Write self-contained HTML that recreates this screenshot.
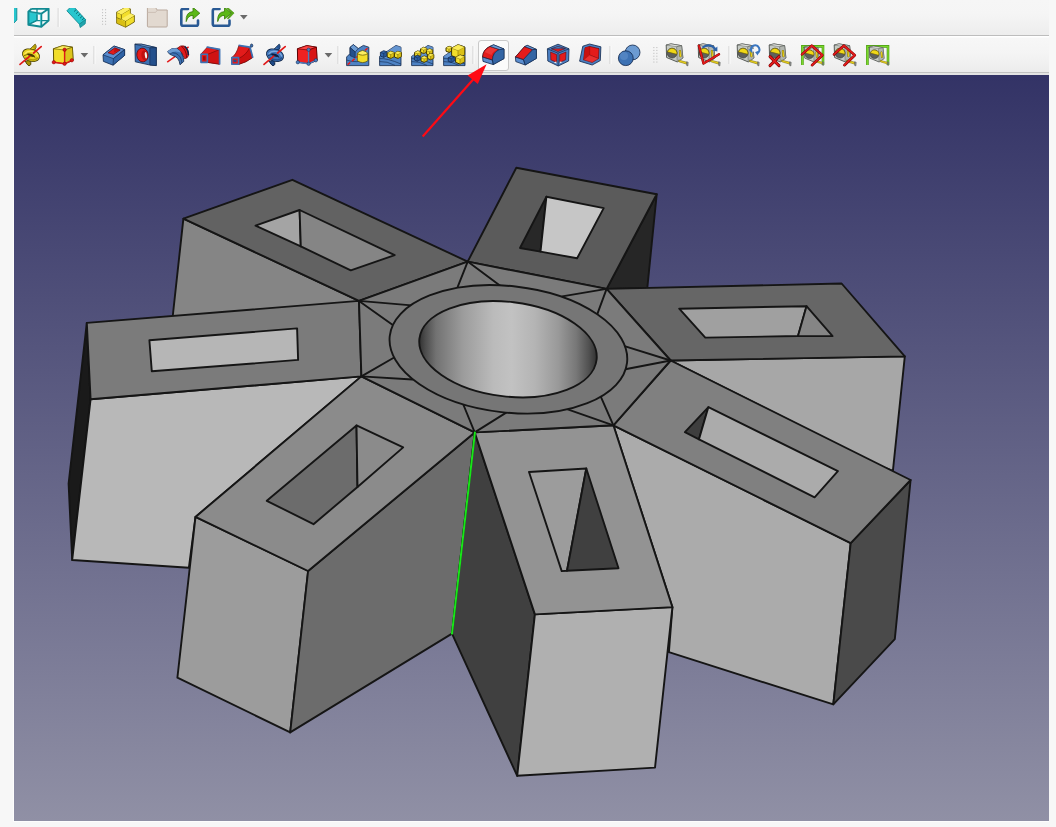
<!DOCTYPE html>
<html><head><meta charset="utf-8"><title>FreeCAD</title>
<style>
html,body{margin:0;padding:0;background:#f7f7f7;}
body{width:1056px;height:827px;overflow:hidden;position:relative;font-family:"Liberation Sans",sans-serif;}
#tb1{position:absolute;left:14px;top:0;width:1035px;height:35px;background:linear-gradient(#f6f6f6 0,#f5f5f5 40%,#ededed 100%);border-bottom:1px solid #bdbdbd;}
#tb2{position:absolute;left:14px;top:36px;width:1035px;height:36px;background:linear-gradient(#ffffff 0,#ffffff 1px,#f7f7f7 2px,#f4f4f4 50%,#ececec 100%);border-bottom:1px solid #c2c2c2;}
#gap{position:absolute;left:14px;top:73px;width:1035px;height:2px;background:#e4e4e4;}
#view{position:absolute;left:14px;top:75px;width:1035px;height:746px;background:linear-gradient(#333366,#9090a5);}
#frame{position:absolute;left:13px;top:75px;width:1036px;height:747px;background:#fdfdfd;}
svg{position:absolute;left:0;top:0;}
</style></head><body>
<div id="tb1"></div><div id="tb2"></div><div id="gap"></div><div id="frame"></div><div id="view"></div>
<svg width="1056" height="827" viewBox="0 0 1056 827">
<defs>
<linearGradient id="bore" gradientUnits="userSpaceOnUse" x1="418" y1="0" x2="598" y2="0" gradientTransform="rotate(-6.8 508 349.2)">
<stop offset="0" stop-color="#2c2c2c"/><stop offset="0.04" stop-color="#4c4c4c"/><stop offset="0.10" stop-color="#727272"/><stop offset="0.25" stop-color="#9c9c9c"/><stop offset="0.42" stop-color="#bbbbbb"/><stop offset="0.52" stop-color="#c2c2c2"/><stop offset="0.65" stop-color="#b4b4b4"/><stop offset="0.78" stop-color="#999999"/><stop offset="0.88" stop-color="#777777"/><stop offset="0.95" stop-color="#505050"/><stop offset="1" stop-color="#2c2c2c"/>
</linearGradient>

<clipPath id="row1"><rect x="14" y="8" width="1035" height="26"/></clipPath>
<g id="tape">
 <path d="M0.2,0.8 L5,-0.3 L15.6,1.5 L16.9,13.8 L11.2,17.7 L0.6,13.3 Z" fill="#c6cac4" stroke="#4a4e4a" stroke-width="0.9" stroke-linejoin="round"/>
 <path d="M0.2,0.8 L5,-0.3 L15.6,1.5 L10.6,2.5 Z" fill="#e6e8e4" stroke="#5a5e5a" stroke-width="0.5" stroke-linejoin="round"/>
 <path d="M10.6,2.5 L15.6,1.5 L16.9,13.8 L11.2,17.7 Z" fill="#b2b6b0" stroke="#5a5e5a" stroke-width="0.5" stroke-linejoin="round"/>
 <circle cx="6.1" cy="8.9" r="4.9" fill="#5e605e" stroke="#3a3c3a" stroke-width="0.7"/>
 <path d="M1.37,7.63 A4.9,4.9 0 0 1 10.83,10.17 Z" fill="#f0d818" stroke="#6a5a00" stroke-width="0.6" stroke-linejoin="round"/>
 <path d="M13.9,6.8 L14.5,12" stroke="#7a6a00" stroke-width="2.2" stroke-linecap="round"/>
 <path d="M13.9,6.8 L14.5,12" stroke="#ecd41c" stroke-width="1.3" stroke-linecap="round"/>
 <path d="M12.6,15.8 L21,18.1 L20.8,20 L12.8,17.6 Z" fill="#f0d818" stroke="#6a5a00" stroke-width="0.5" stroke-linejoin="round"/>
 <path d="M20.7,17.5 L22.2,18.1 L21.9,21.7 L20.7,21.3 Z" fill="#9a9e9a" stroke="#4a4c4a" stroke-width="0.5"/>
</g>
<g id="ycube" style="vector-effect:non-scaling-stroke">
 <path vector-effect="non-scaling-stroke" d="M0,3 L5,0.4 L10,2.2 L10,8 L5,10.6 L0,8.6 Z" fill="#f2de2a" stroke="#3e3400" stroke-width="1" stroke-linejoin="round"/>
 <path vector-effect="non-scaling-stroke" d="M0,3 L5,4.8 L10,2.2 M5,4.8 L5,10.6" fill="none" stroke="#5f5200" stroke-width="0.6"/>
 <path d="M5,4.8 L10,2.2 L10,8 L5,10.6 Z" fill="#c8aa08" opacity="0.55"/>
 <path d="M0,3 L5,0.4 L10,2.2 L5,4.8 Z" fill="#fcee60" opacity="0.8"/>
</g>
<g id="bcube">
 <path vector-effect="non-scaling-stroke" d="M0,3 L5,0.4 L10,2.2 L10,8 L5,10.6 L0,8.6 Z" fill="#2f64aa" stroke="#10264a" stroke-width="0.8" stroke-linejoin="round"/>
 <path vector-effect="non-scaling-stroke" d="M0,3 L5,4.8 L10,2.2 M5,4.8 L5,10.6" fill="none" stroke="#10264a" stroke-width="0.6"/>
 <path d="M5,4.8 L10,2.2 L10,8 L5,10.6 Z" fill="#24508c" opacity="0.6"/>
</g>

</defs>
<g stroke="#151515" stroke-width="1.9" stroke-linejoin="round" stroke-linecap="round">
<polygon points="183.4,218.6 359.0,300.9 359.0,332.0 171.0,332.0" fill="#858585"/>
<polygon points="359.0,300.9 183.4,218.6 292.4,179.8 467.7,261.6" fill="#626262"/>
<polygon points="255.5,225.6 299.6,210.0 300.8,246.4" fill="#a4a4a4"/>
<polygon points="299.6,210.0 394.7,255.2 350.8,270.4 300.8,246.4" fill="#858585"/>
<polygon points="656.7,194.3 606.6,288.9 647.3,288.0" fill="#262626"/>
<polygon points="467.7,261.6 516.3,167.7 656.7,194.3 606.6,288.9" fill="#5b5b5b"/>
<polygon points="546.4,196.8 520.0,248.0 540.5,251.6" fill="#282828"/>
<polygon points="546.4,196.8 603.7,208.1 577.1,258.3 540.5,251.6" fill="#c6c6c6"/>
<polygon points="670.6,360.5 904.8,356.4 892.9,470.9 880.0,466.0" fill="#a7a7a7"/>
<polygon points="606.6,288.9 841.6,283.5 904.8,356.4 670.6,360.5" fill="#666666"/>
<polygon points="679.2,308.7 806.5,306.2 798.0,336.0 705.3,337.6" fill="#a0a0a0"/>
<polygon points="806.5,306.2 832.6,336.1 798.0,336.0" fill="#858585"/>
<polygon points="86.8,322.9 68.6,483.5 72.2,560.0 90.6,399.2" fill="#1a1a1a"/>
<polygon points="90.6,399.2 361.4,376.4 195.5,516.9 188.9,567.7 72.2,560.0" fill="#b8b8b8"/>
<polygon points="86.8,322.9 359.0,300.9 361.4,376.4 90.6,399.2" fill="#7b7b7b"/>
<polygon points="149.4,340.2 297.1,328.4 298.1,359.9 151.8,371.3" fill="#b6b6b6"/>
<polygon points="613.4,425.3 850.7,543.1 833.3,704.4 668.9,652.2 672.4,607.2" fill="#ababab"/>
<polygon points="910.6,480.0 850.7,543.1 833.3,704.4 894.8,639.1" fill="#4a4a4a"/>
<polygon points="613.4,425.3 670.6,360.5 910.6,480.0 850.7,543.1" fill="#808080"/>
<polygon points="708.4,407.1 684.9,432.2 699.0,439.3" fill="#3e3e3e"/>
<polygon points="708.4,407.1 837.9,471.2 814.6,497.3 699.0,439.3" fill="#ababab"/>
<polygon points="195.5,516.9 308.1,571.0 290.2,732.4 177.4,677.7" fill="#9c9c9c"/>
<polygon points="308.1,571.0 474.7,432.4 452.0,633.6 290.2,732.4" fill="#6c6c6c"/>
<polygon points="361.4,376.4 474.7,432.4 308.1,571.0 195.5,516.9" fill="#8b8b8b"/>
<polygon points="356.5,425.4 357.5,487.0 313.5,524.2 266.8,500.8" fill="#6c6c6c"/>
<polygon points="356.5,425.4 403.2,447.4 357.5,487.0" fill="#8b8b8b"/>
<polygon points="474.7,432.4 534.9,614.4 517.2,775.8 452.0,633.6" fill="#404040"/>
<polygon points="534.9,614.4 672.4,607.1 655.0,767.6 517.2,775.8" fill="#b0b0b0"/>
<polygon points="474.7,432.4 613.4,425.3 672.4,607.1 534.9,614.4" fill="#939393"/>
<polygon points="529.0,472.0 586.3,468.5 567.0,570.8 561.7,571.1" fill="#9c9c9c"/>
<polygon points="586.3,468.5 618.5,568.2 567.0,570.8" fill="#404040"/>
<polygon points="467.7,261.6 606.6,288.9 670.6,360.5 613.4,425.3 474.7,432.4 361.4,376.4 359.0,300.9" fill="#7b7b7b"/>
<line x1="359.0" y1="300.9" x2="411.6" y2="305.4"/><line x1="359.0" y1="300.9" x2="392.8" y2="325.0"/><line x1="361.4" y1="376.4" x2="393.7" y2="357.7"/><line x1="361.4" y1="376.4" x2="412.4" y2="379.5"/><line x1="467.7" y1="261.6" x2="457.6" y2="287.2"/><line x1="467.7" y1="261.6" x2="500.2" y2="285.8"/><line x1="606.6" y1="288.9" x2="562.2" y2="296.4"/><line x1="606.6" y1="288.9" x2="597.2" y2="314.4"/><line x1="670.6" y1="360.5" x2="625.3" y2="346.3"/><line x1="670.6" y1="360.5" x2="625.3" y2="369.3"/><line x1="474.7" y1="432.4" x2="463.1" y2="404.0"/><line x1="474.7" y1="432.4" x2="506.2" y2="412.6"/><line x1="613.4" y1="425.3" x2="567.7" y2="409.4"/><line x1="613.4" y1="425.3" x2="601.0" y2="397.1"/>
<ellipse cx="508.4" cy="349.3" rx="119.4" ry="63.2" transform="rotate(6.4 508.4 349.3)" fill="#767676"/>
<ellipse cx="508.0" cy="349.2" rx="89.2" ry="47.3" transform="rotate(6.8 508.0 349.2)" fill="url(#bore)"/>
<line x1="474.9" y1="432.6" x2="452.0" y2="633.6" stroke="#18e618" stroke-width="2"/>
</g>
<g clip-path="url(#row1)">
<path d="M13,6 L16.8,6 L16.8,20 L13,24 Z" fill="#27c6ce" stroke="#128a92" stroke-width="0.9"/>
<g stroke="#128a92" stroke-width="1.9" fill="none" stroke-linejoin="round">
<path d="M28.4,11.6 L31.6,8.8 L48.6,8.8 L48.6,20.6 L41.3,26.7 L28.4,24.7 Z" fill="#f6fbfb" stroke="none"/>
<path d="M28.4,11.6 L37,13.6 L37,20.4 L28.4,24.7 Z" fill="#27c6ce" stroke-width="0.8"/>
<path d="M37,8.8 L37,20.4 L48.6,20.6 M37,20.4 L28.4,24.7" stroke-width="1.3"/>
<path d="M31.6,8.8 L48.6,8.8 L48.6,20.6 L41.3,26.7 M41.3,13.8 L48.6,8.8 M28.4,11.6 L31.6,8.8"/>
<path d="M28.4,11.6 L41.3,13.8 L41.3,26.7 L28.4,24.7 Z"/>
<path d="M29.2,12.6 L40.4,14.6 L40.4,25.6" stroke="#3fd4dc" stroke-width="0.6"/>
</g>
<line x1="58.2" y1="8" x2="58.2" y2="27" stroke="#cfcfcf" stroke-width="1"/><line x1="59.2" y1="8" x2="59.2" y2="27" stroke="#fbfbfb" stroke-width="1"/>
<path d="M66.9,10.8 L71.6,6 L73,6 L85.6,19.6 L79.4,24.2 Z" fill="#27c6ce" stroke="#128a92" stroke-width="0.9" stroke-linejoin="round"/>
<path d="M79.4,24.2 L85.6,19.6 L85.2,23.8 L80.2,27.6 Z" fill="#1fa4ac" stroke="#128a92" stroke-width="0.8" stroke-linejoin="round"/>
<path d="M76.2,9.6 l-2.2,2 M78.2,11.8 l-2.2,2 M80.2,14 l-2.2,2 M82.2,16.2 l-2.2,2 M84,18.2 l-2.2,2" stroke="#0b6970" stroke-width="0.9"/>
<rect x="102.0" y="9.2" width="1.1" height="1.1" fill="#c2c2c2"/><rect x="105.0" y="9.2" width="1.1" height="1.1" fill="#c2c2c2"/><rect x="102.0" y="12.1" width="1.1" height="1.1" fill="#c2c2c2"/><rect x="105.0" y="12.1" width="1.1" height="1.1" fill="#c2c2c2"/><rect x="102.0" y="15.0" width="1.1" height="1.1" fill="#c2c2c2"/><rect x="105.0" y="15.0" width="1.1" height="1.1" fill="#c2c2c2"/><rect x="102.0" y="17.9" width="1.1" height="1.1" fill="#c2c2c2"/><rect x="105.0" y="17.9" width="1.1" height="1.1" fill="#c2c2c2"/><rect x="102.0" y="20.8" width="1.1" height="1.1" fill="#c2c2c2"/><rect x="105.0" y="20.8" width="1.1" height="1.1" fill="#c2c2c2"/><rect x="102.0" y="23.7" width="1.1" height="1.1" fill="#c2c2c2"/><rect x="105.0" y="23.7" width="1.1" height="1.1" fill="#c2c2c2"/>
<g stroke="#5f5200" stroke-width="0.8" stroke-linejoin="round">
<path d="M116.6,12.2 L126,7 L130.4,9 L130.4,13.6 L134.4,15.6 L134.4,22 L125.6,27.2 L116.6,23.2 Z" fill="#f2de2a"/>
<path d="M116.6,12.2 L121.4,14.4 L130.4,9 M121.4,14.4 L121.4,19 L125.6,21 L134.4,15.6 M125.6,21 L125.6,27.2 M116.6,17.6 L121.4,19.6" fill="none" stroke-width="0.7"/>
<path d="M116.6,12.2 L126,7 L130.4,9 L121.4,14.4 Z" fill="#fcee60" stroke="none"/>
<path d="M121.4,19 L130.4,13.6 L134.4,15.6 L125.6,21 Z" fill="#fcee60" stroke="none"/>
<path d="M116.6,18 L125.6,22 L125.6,27.2 L116.6,23.2 Z" fill="#c8aa08" stroke="none" opacity="0.6"/>
</g>
<path d="M147.4,7.5 L155.5,7.5 L157.2,10 L167.2,10 L167.2,26 Q167.2,27 166.2,27 L148.4,27 Q147.4,27 147.4,26 Z" fill="#e2d9d0" stroke="#b9a99d" stroke-width="1"/>
<path d="M147.4,12.4 L155.6,12.4 L157.4,10" fill="none" stroke="#c7b9ae" stroke-width="0.8"/>
<path d="M188,9 L183,9 Q181.3,9 181.3,10.8 L181.3,24 Q181.3,25.8 183,25.8 L196.2,25.8 Q198,25.8 198,24 L198,20.5" fill="none" stroke="#2a5a94" stroke-width="2.6" stroke-linecap="round"/><path d="M186.2,21.6 Q185.4,12 193,11.6 L193,7.4 L199.8,13.2 L193,19 L193,15.4 Q188,15.2 186.2,21.6 Z" fill="#5cb818" stroke="#357a06" stroke-width="0.8" stroke-linejoin="round"/>
<path d="M219.5,9 L214.5,9 Q212.8,9 212.8,10.8 L212.8,24 Q212.8,25.8 214.5,25.8 L227.7,25.8 Q229.5,25.8 229.5,24 L229.5,20.5" fill="none" stroke="#2a5a94" stroke-width="2.6" stroke-linecap="round"/><path d="M227.9,7.6 L234.1,13 L228.9,18.6 L227.1,18.6 L231.5,13 L226.1,7.6 Z" fill="#58ae14" stroke="#3c8208" stroke-width="0.5"/><path d="M217.7,21.6 Q216.9,12 224.5,11.6 L224.5,7.4 L231.3,13.2 L224.5,19 L224.5,15.4 Q219.5,15.2 217.7,21.6 Z" fill="#5cb818" stroke="#357a06" stroke-width="0.8" stroke-linejoin="round"/>
</g>
<polygon points="240,15 247.6,15 243.8,19.4" fill="#6a6a6a"/>
<rect x="478.5" y="40.5" width="30" height="30" rx="2.5" fill="#fbfbfb" stroke="#c9c9c9" stroke-width="1"/>
<g transform="translate(20,44)" stroke-linejoin="round" stroke-linecap="round">
<path d="M5.2,17.2 L9.6,16.4 Q11.4,18.6 10.8,20.6 L9,21.9 Q6.6,20.6 5.2,17.2 Z" fill="#a89200" stroke="#4a4000" stroke-width="0.9"/>
<path d="M9.4,5.8 L15.2,0.2 Q16.4,1.6 16,3.6 L14.6,6.4 L11.6,7 Z" fill="#e8d220" stroke="#4a4000" stroke-width="0.9"/>
<path d="M12.6,2.8 L15.2,0.2 Q16.4,1.6 16,3.6 L14.6,6 Z" fill="#a89200" stroke="none" opacity="0.75"/>
<ellipse cx="11" cy="11.2" rx="6.3" ry="3.5" transform="rotate(18 11 11.2)" fill="#4a4000" stroke="#4a4000" stroke-width="5.9"/>
<ellipse cx="11" cy="11.2" rx="6.3" ry="3.5" transform="rotate(18 11 11.2)" fill="none" stroke="#e8d220" stroke-width="4.3"/>
<path d="M5,9.6 Q7,6.6 12,7.4 Q16.6,8.6 17.6,12" fill="none" stroke="#fdf06a" stroke-width="1.3" opacity="0.9"/>
<path d="M6,13.8 Q9,16 13.4,16 Q16.4,15.6 17.4,14" fill="none" stroke="#a89200" stroke-width="1.6" opacity="0.8"/>
<path d="M4.2,11.6 Q7.6,9.4 11.4,10.4 Q14.4,11.4 15,13.6" fill="none" stroke="#4a4000" stroke-width="0.8" opacity="0.85"/>
<line x1="0" y1="20.4" x2="9.8" y2="12.2" stroke="#e01a1a" stroke-width="1.7"/>
<line x1="13.6" y1="9" x2="21.2" y2="2.6" stroke="#e01a1a" stroke-width="1.7"/>
</g>
<g transform="translate(52,44.4)" stroke="#5f5200" stroke-width="0.8" stroke-linejoin="round">
<path d="M1.4,4.4 L10.8,1.2 L20.4,2.8 L21.1,15.9 L12.6,19.4 L1.7,17.8 Z" fill="#f2de2a" stroke-width="1"/>
<path d="M1.4,4.4 L10.8,1.2 L20.4,2.8 L12.6,5.6 Z" fill="#fcee60" stroke-width="0.6"/>
<path d="M12.6,5.6 L20.4,2.8 L21.1,15.9 L12.6,19.4 Z" fill="#dcc41c" stroke-width="0.6"/>
<path d="M12.6,5.4 L12.6,19.4 M1.7,17.8 L12.6,19.4 L19.8,15.9" fill="none" stroke="#e01818" stroke-width="1.4"/>
<g fill="#e01818" stroke="#8a0000" stroke-width="0.5"><circle cx="12.6" cy="5.3" r="1.7"/><circle cx="1.8" cy="17.8" r="1.7"/><circle cx="12.6" cy="19.4" r="1.7"/><circle cx="19.8" cy="15.9" r="1.7"/></g>
</g>
<polygon points="80.6,53 88.19999999999999,53 84.39999999999999,57.4" fill="#6a6a6a"/>
<line x1="94" y1="46" x2="94" y2="64" stroke="#cfcfcf" stroke-width="1"/><line x1="95" y1="46" x2="95" y2="64" stroke="#fbfbfb" stroke-width="1"/>
<g stroke="#10264a" stroke-width="0.8" stroke-linejoin="round">
<path d="M103,54.8 L114,46 L124.6,49.6 L124.6,55.4 L113,65.2 L103.4,61.4 Z" fill="#3d72b4"/>
<path d="M103,54.8 L114,46 L124.6,49.6 L113.4,58.6 Z" fill="#5b8ed0" stroke-width="0.6"/>
<path d="M113.4,58.6 L124.6,49.6 L124.6,55.4 L113,65.2 Z" fill="#2f62a4" stroke-width="0.6"/>
<path d="M108,52.8 L114.8,47.8 L120.2,50 L113.4,54.6 Z" fill="#e31b1b" stroke="#5a0000" stroke-width="0.6"/>
<path d="M114.8,47.8 L113.8,52.6 L120.2,50 Z" fill="#a60a0a" stroke="none" opacity="0.6"/>
</g>
<g stroke="#10264a" stroke-width="0.8" stroke-linejoin="round">
<path d="M134.9,44.2 L141.6,44.2 L156.3,47.6 L156.3,65.6 L149.8,65 L135.3,61.8 Z" fill="#3d72b4"/>
<path d="M134.9,44.2 L141.6,44.2 L156.3,47.6 L149.8,47.8 Z" fill="#6c9bd2" stroke-width="0.6"/>
<path d="M149.8,47.8 L156.3,47.6 L156.3,65.6 L149.8,65 Z" fill="#24508c" stroke-width="0.6"/>
<ellipse cx="142.5" cy="55" rx="5.7" ry="6.9" fill="#e31b1b" stroke="#5a0000" stroke-width="0.7" transform="rotate(-6 142.5 55)"/>
<ellipse cx="144.4" cy="55.2" rx="3" ry="5" fill="#a60a0a" stroke="none" transform="rotate(-6 144.4 55.2)" opacity="0.55"/>
<ellipse cx="145.9" cy="55.2" rx="1.1" ry="3.3" fill="#f4f4f4" stroke="none" transform="rotate(-6 145.9 55.2)"/>
</g>
<g stroke-linejoin="round">
<line x1="167.2" y1="62.2" x2="188.6" y2="46.8" stroke="#e31b1b" stroke-width="1.5"/>
<path d="M177,48.4 Q180.6,44.8 184.2,46 Q188.8,49.6 188.6,55.4 Q187.8,58.2 184.6,58.8 Q183,52.6 177,48.4 Z" fill="#e31b1b" stroke="#5a0000" stroke-width="0.7"/>
<path d="M181.4,46.2 Q186.4,50 186.6,57.6" fill="none" stroke="#5a0000" stroke-width="0.7"/>
<path d="M184.6,46.4 Q188.4,49.6 188.4,55" fill="none" stroke="#10264a" stroke-width="1.6"/>
<path d="M167.6,51.6 Q171.6,47.4 176.8,48.4 Q183.6,53 183.8,61.4 L180,64.8 Q179.2,57.2 172.8,55.6 Q169,54.8 167.6,51.6 Z" fill="#3d72b4" stroke="#10264a" stroke-width="0.8"/>
<path d="M169.6,53.4 Q176,51.2 180.2,57 Q181.8,60 181.8,63" fill="none" stroke="#10264a" stroke-width="0.6"/>
<path d="M167.6,51.6 Q171.6,47.4 176.8,48.4 Q179.6,50.2 181.4,53 Q175.4,49.6 169.6,53.4 Z" fill="#6c9bd2" stroke="none"/>
</g>
<g stroke-linejoin="round">
<path d="M201,54 L207.4,47 L219.4,49.6 L219.4,64.2 L207.6,62.4 L201,62.4 Z" fill="#e31b1b" stroke="#5a0000" stroke-width="0.6"/>
<path d="M207.6,54.4 L219.4,49.6 L219.4,64.2 L207.6,62.4 Z" fill="#d01212" stroke="#5a0000" stroke-width="0.5"/>
<path d="M206.6,47 L219.6,49.4 L219.6,64.4" fill="none" stroke="#3d72b4" stroke-width="1.7"/>
<rect x="201" y="54.2" width="6.4" height="8.2" fill="none" stroke="#3d72b4" stroke-width="1.6"/>
<rect x="203" y="56.2" width="2.6" height="4.2" fill="#a60a0a" stroke="none"/>
</g>
<g stroke-linejoin="round">
<path d="M231.6,57.6 Q236.4,54.6 238.8,45.6 L249.8,47.4 L252.6,57.6 Q246.4,62.4 238.6,64.4 L231.6,64 Z" fill="#e31b1b" stroke="#5a0000" stroke-width="0.6"/>
<path d="M238.6,58.4 Q246,55.4 249.8,47.4 L252.6,57.6 Q246.4,62.4 238.6,64.4 Z" fill="#cc1010" stroke="#5a0000" stroke-width="0.5"/>
<path d="M238.6,45.4 L250,47.2 L252.8,57.8" fill="none" stroke="#3d72b4" stroke-width="1.7"/>
<rect x="231.8" y="57.6" width="6.8" height="6.6" fill="#e31b1b" stroke="#3d72b4" stroke-width="1.6"/>
<rect x="233.4" y="59.8" width="3.2" height="2.2" rx="1" fill="#24508c" stroke="none"/>
<ellipse cx="251.6" cy="45.6" rx="1.2" ry="1.6" fill="#3d72b4" stroke="#10264a" stroke-width="0.7"/>
</g>
<g transform="translate(264,44)" stroke-linejoin="round" stroke-linecap="round">
<path d="M5.2,17.2 L9.6,16.4 Q11.4,18.6 10.8,20.6 L9,21.9 Q6.6,20.6 5.2,17.2 Z" fill="#1f4a86" stroke="#0c2244" stroke-width="0.9"/>
<path d="M9.4,5.8 L15.2,0.2 Q16.4,1.6 16,3.6 L14.6,6.4 L11.6,7 Z" fill="#3f74b8" stroke="#0c2244" stroke-width="0.9"/>
<path d="M12.6,2.8 L15.2,0.2 Q16.4,1.6 16,3.6 L14.6,6 Z" fill="#1f4a86" stroke="none" opacity="0.75"/>
<ellipse cx="11" cy="11.2" rx="6.3" ry="3.5" transform="rotate(18 11 11.2)" fill="#0c2244" stroke="#0c2244" stroke-width="5.9"/>
<ellipse cx="11" cy="11.2" rx="6.3" ry="3.5" transform="rotate(18 11 11.2)" fill="none" stroke="#3f74b8" stroke-width="4.3"/>
<path d="M5,9.6 Q7,6.6 12,7.4 Q16.6,8.6 17.6,12" fill="none" stroke="#86b0e2" stroke-width="1.3" opacity="0.9"/>
<path d="M6,13.8 Q9,16 13.4,16 Q16.4,15.6 17.4,14" fill="none" stroke="#1f4a86" stroke-width="1.6" opacity="0.8"/>
<path d="M4.2,11.6 Q7.6,9.4 11.4,10.4 Q14.4,11.4 15,13.6" fill="none" stroke="#0c2244" stroke-width="0.8" opacity="0.85"/>
<line x1="0" y1="20.4" x2="9.8" y2="12.2" stroke="#e01a1a" stroke-width="1.7"/>
<line x1="13.6" y1="9" x2="21.2" y2="2.6" stroke="#e01a1a" stroke-width="1.7"/>
</g>
<g transform="translate(296,44.4)" stroke="#5a0000" stroke-width="0.8" stroke-linejoin="round">
<path d="M1.4,4.4 L10.8,1.2 L20.4,2.8 L21.1,15.9 L12.6,19.4 L1.7,17.8 Z" fill="#ee2222" stroke-width="1"/>
<path d="M1.4,4.4 L10.8,1.2 L20.4,2.8 L12.6,5.6 Z" fill="#f44" stroke-width="0.6"/>
<path d="M12.6,5.6 L20.4,2.8 L21.1,15.9 L12.6,19.4 Z" fill="#d81414" stroke-width="0.6"/>
<path d="M12.6,5.4 L12.6,19.4 M1.7,17.8 L12.6,19.4 L19.8,15.9" fill="none" stroke="#4a7ec0" stroke-width="1.4"/>
<g fill="#4a7ec0" stroke="#10264a" stroke-width="0.5"><circle cx="12.6" cy="5.3" r="1.7"/><circle cx="1.8" cy="17.8" r="1.7"/><circle cx="12.6" cy="19.4" r="1.7"/><circle cx="19.8" cy="15.9" r="1.7"/></g>
</g>
<polygon points="324.6,53 332.20000000000005,53 328.40000000000003,57.4" fill="#6a6a6a"/>
<line x1="338" y1="46" x2="338" y2="64" stroke="#cfcfcf" stroke-width="1"/><line x1="339" y1="46" x2="339" y2="64" stroke="#fbfbfb" stroke-width="1"/>
<g stroke="#10264a" stroke-width="0.8" stroke-linejoin="round">
<path d="M346.6,65.6 L346.6,57 L350,53.6 L350,47.4 L353.4,44.6 L358.2,48.6 L363.4,45.4 L368.8,47.2 L368.8,65.6 Z" fill="#4d82c4"/>
<path d="M350,47.4 L353.4,44.6 L358.2,48.6 L355.2,52 Z" fill="#6c9bd2" stroke-width="0.6"/>
<path d="M350,47.4 L355.2,52 L355.2,58 L350,55.6 Z" fill="#24508c" stroke-width="0.6"/>
<path d="M346.6,60 Q356,64 368.8,58.6" fill="none" stroke-width="0.6"/>
<path d="M347.6,64.6 L368.4,47.6" stroke="#e31b1b" stroke-width="1.5" stroke-dasharray="3.4,2.2"/>
<path d="M357.4,53.6 L357.4,60.8 Q362.6,64.4 367.8,60.8 L367.8,53.6 Z" fill="#f2de2a" stroke="#5f5200" stroke-width="0.7"/>
<path d="M357.4,53.6 Q357.8,51.6 362.6,50.4 Q367.4,51.6 367.8,53.6 Q362.6,56.8 357.4,53.6 Z" fill="#fcee60" stroke="#5f5200" stroke-width="0.7"/>
</g>
<g stroke="#10264a" stroke-width="0.8" stroke-linejoin="round">
<path d="M379.6,65.6 L379.6,56.4 L396,45.4 L401,47.2 L401,65.6 Z" fill="#4d82c4"/>
<path d="M379.6,58.6 Q387,58 401,64 M379.6,61.6 Q387,61 395,65.4" fill="none" stroke-width="0.6"/>
<path d="M379.6,56.4 L396,45.4 L401,47.2 L401,52 L385,58 Z" fill="#74a2da" opacity="0.6" stroke="none"/>
</g>
<use href="#bcube" transform="translate(380.4,50.4) scale(0.66)"/><use href="#ycube" transform="translate(387.2,51) scale(0.7)"/><use href="#ycube" transform="translate(394.4,51) scale(0.7)"/>
<g stroke="#10264a" stroke-width="0.8" stroke-linejoin="round">
<path d="M411.6,65.6 L411.6,56.4 L428,45.4 L433,47.2 L433,65.6 Z" fill="#4d82c4"/>
<path d="M411.6,58.6 Q419,58 433,64 M411.6,61.6 Q419,61 427,65.4" fill="none" stroke-width="0.6"/>
<path d="M411.6,56.4 L428,45.4 L433,47.2 L433,52 L417,58 Z" fill="#74a2da" opacity="0.6" stroke="none"/>
</g>
<use href="#ycube" transform="translate(420.6,47) scale(0.62)"/>
<use href="#ycube" transform="translate(414.6,50.6) scale(0.62)"/>
<use href="#ycube" transform="translate(426.4,48.6) scale(0.62)"/>
<use href="#ycube" transform="translate(427.6,53.2) scale(0.62)"/>
<use href="#ycube" transform="translate(421,55.8) scale(0.62)"/>
<use href="#bcube" transform="translate(414.4,55) scale(0.58)"/>
<g stroke="#10264a" stroke-width="0.8" stroke-linejoin="round">
<path d="M443.6,65.6 L443.6,56.4 L460,45.4 L465,47.2 L465,65.6 Z" fill="#4d82c4"/>
<path d="M443.6,58.6 Q451,58 465,64 M443.6,61.6 Q451,61 459,65.4" fill="none" stroke-width="0.6"/>
<path d="M443.6,56.4 L460,45.4 L465,47.2 L465,52 L449,58 Z" fill="#74a2da" opacity="0.6" stroke="none"/>
</g>
<use href="#ycube" transform="translate(446,46) scale(0.6)"/><use href="#ycube" transform="translate(451.6,44) scale(1.3,1.35)"/><use href="#ycube" transform="translate(455.6,54.6) scale(0.9)"/><use href="#bcube" transform="translate(448.2,56) scale(0.6)"/>
<line x1="473" y1="46" x2="473" y2="64" stroke="#cfcfcf" stroke-width="1"/><line x1="474" y1="46" x2="474" y2="64" stroke="#fbfbfb" stroke-width="1"/>
<g stroke="#10264a" stroke-width="0.8" stroke-linejoin="round">
<path d="M482.6,57 Q483,49.4 490,46.4 L493.6,44.8 L504,49 L504,58.6 L493.2,64.6 L483,61.4 Z" fill="#5b8ed0"/>
<path d="M482.6,57 Q483,49.4 490,46.4 L499.6,49.6 Q492.8,52 492.4,60 Z" fill="#e31b1b" stroke="#5a0000" stroke-width="0.6"/>
<path d="M484.6,52 Q486.6,48.6 490.2,47.2 L497.6,49.6 Q493,51.4 491.4,55 Z" fill="#f24a4a" stroke="none" opacity="0.55"/>
<path d="M490,46.4 L493.6,44.8 L504,49 L499.6,49.6 Z" fill="#6c9bd8" stroke-width="0.6"/>
<path d="M492.4,60 Q492.8,52 499.6,49.6 L504,49 L504,58.6 L493.2,64.6 Z" fill="#3465a4" stroke-width="0.6"/>
<path d="M482.6,57 L492.4,60 L493.2,64.6" fill="none" stroke-width="0.6"/>
</g>
<g stroke="#10264a" stroke-width="0.8" stroke-linejoin="round">
<path d="M515.4,57 L524.6,46.6 L527.4,45.4 L536.4,49.4 L536.4,58.4 L525.2,65 L515.8,61.6 Z" fill="#5b8ed0"/>
<path d="M515.4,57 L524.6,46.6 L532.8,49.6 L523.4,59.6 Z" fill="#e31b1b" stroke="#5a0000" stroke-width="0.6"/>
<path d="M524.6,46.6 L527.4,45.4 L536.4,49.4 L532.8,49.6 Z" fill="#6c9bd8" stroke-width="0.6"/>
<path d="M523.4,59.6 L532.8,49.6 L536.4,49.4 L536.4,58.4 L525.2,65 Z" fill="#3465a4" stroke-width="0.6"/>
<path d="M515.4,57 L523.4,59.6 L525.2,65" fill="none" stroke-width="0.6"/>
</g>
<g stroke="#10264a" stroke-width="0.8" stroke-linejoin="round">
<path d="M558,44.2 L569,48.8 L568.6,61 L558.2,66 L547.8,61 L547.4,48.8 Z" fill="#4a7fc2"/>
<path d="M547.4,48.8 L558,53.2 L569,48.8 M558,53.2 L558.2,66" fill="none" stroke-width="0.7"/>
<path d="M550.6,52 L556.6,54.6 L556.6,62.4 L550.8,59.8 Z" fill="#e31b1b" stroke="#5a0000" stroke-width="0.5"/>
<path d="M559.6,54.6 L566,52 L565.6,59.8 L559.6,62.4 Z" fill="#e31b1b" stroke="#5a0000" stroke-width="0.5"/>
<path d="M551.4,48.8 L558,46.6 L565.4,48.6 L558,51.6 Z" fill="#e31b1b" stroke="#5a0000" stroke-width="0.5"/>
<path d="M551.4,48.8 L565.4,48.6 L558,46.6 Z" fill="#4a7fc2" stroke="#10264a" stroke-width="0.4"/>
<path d="M553.6,62.2 L556.4,63.4 L556.4,61.6 Z M562.6,62 L559.8,63.4 L559.8,61.6 Z" fill="#e8e8e8" stroke="none"/>
</g>
<g stroke="#10264a" stroke-width="0.8" stroke-linejoin="round">
<path d="M582.8,46.2 L589.6,44 L600.9,46.8 L600.3,60.6 L592.2,65 L579.6,61.2 Z" fill="#4a7fc2"/>
<path d="M585,47.8 L589.6,46.4 L599,48.6 L598.6,58.6 L592.2,62.4 L583.6,59.8 Z" fill="#e31b1b" stroke="#5a0000" stroke-width="0.6"/>
<path d="M589.6,46.4 L589.6,55 L583.6,59.8 M589.6,55 L598.6,58.6" fill="none" stroke="#5a0000" stroke-width="0.6"/>
<path d="M585,47.8 L589.6,46.4 L589.6,55 L583.6,59.8 Z" fill="#c81010" stroke="none"/>
<path d="M589.6,55 L598.6,58.6 L592.2,62.4 L583.6,59.8 Z" fill="#f24a4a" stroke="none" opacity="0.45"/>
</g>
<line x1="610" y1="46" x2="610" y2="64" stroke="#cfcfcf" stroke-width="1"/><line x1="611" y1="46" x2="611" y2="64" stroke="#fbfbfb" stroke-width="1"/>
<circle cx="632.6" cy="52.4" r="7.4" fill="#6c9bd2" stroke="#10264a" stroke-width="0.8"/>
<circle cx="625.8" cy="58.2" r="7.4" fill="#3d72b4" stroke="#10264a" stroke-width="0.8"/>
<circle cx="624" cy="56" r="4" fill="#6c9bd2" opacity="0.45"/>
<rect x="653.3" y="47.0" width="1.1" height="1.1" fill="#c2c2c2"/><rect x="656.3" y="47.0" width="1.1" height="1.1" fill="#c2c2c2"/><rect x="653.3" y="49.9" width="1.1" height="1.1" fill="#c2c2c2"/><rect x="656.3" y="49.9" width="1.1" height="1.1" fill="#c2c2c2"/><rect x="653.3" y="52.8" width="1.1" height="1.1" fill="#c2c2c2"/><rect x="656.3" y="52.8" width="1.1" height="1.1" fill="#c2c2c2"/><rect x="653.3" y="55.7" width="1.1" height="1.1" fill="#c2c2c2"/><rect x="656.3" y="55.7" width="1.1" height="1.1" fill="#c2c2c2"/><rect x="653.3" y="58.6" width="1.1" height="1.1" fill="#c2c2c2"/><rect x="656.3" y="58.6" width="1.1" height="1.1" fill="#c2c2c2"/><rect x="653.3" y="61.5" width="1.1" height="1.1" fill="#c2c2c2"/><rect x="656.3" y="61.5" width="1.1" height="1.1" fill="#c2c2c2"/>
<use href="#tape" transform="translate(666,44.2) scale(1)"/>
<use href="#tape" transform="translate(698,44.2) scale(1)"/>
<path d="M702.4,47.6 Q709.6,42.6 715.4,49" fill="none" stroke="#2d62a8" stroke-width="2"/><path d="M712.6,50.4 L717.4,51.6 L717.4,46.4 Z" fill="#2d62a8"/><path d="M698.9,45.6 L703.5,63.5 L719,54.3" fill="none" stroke="#7a0000" stroke-width="2.4" stroke-linejoin="round" stroke-linecap="round"/><path d="M698.9,45.6 L703.5,63.5 L719,54.3" fill="none" stroke="#e31b1b" stroke-width="1.6" stroke-linejoin="round" stroke-linecap="round"/>
<line x1="729" y1="46" x2="729" y2="64" stroke="#cfcfcf" stroke-width="1"/><line x1="730" y1="46" x2="730" y2="64" stroke="#fbfbfb" stroke-width="1"/>
<use href="#tape" transform="translate(737,44.2) scale(1)"/>
<path d="M751,50 A4.2,4.2 0 1 1 757.6,53" fill="none" stroke="#3a76c0" stroke-width="2"/><path d="M748.4,49.4 L753.4,48.6 L752,53 Z" fill="#3a76c0"/><path d="M759.6,50.6 L755,52 L757.6,55.4 Z" fill="#3a76c0"/><rect x="752.2" y="49" width="4" height="2.6" fill="#eef2f8"/>
<use href="#tape" transform="translate(769,44.2) scale(1)"/>
<path d="M770,56.6 L779,65.6 M779,56.6 L770,65.6" stroke="#7a0000" stroke-width="2.9" stroke-linecap="round"/><path d="M770,56.6 L779,65.6 M779,56.6 L770,65.6" stroke="#e31b1b" stroke-width="1.9" stroke-linecap="round"/>
<path d="M802.4,65 L802.4,46.4 L823,46.4 L823,65" fill="none" stroke="#4a9a10" stroke-width="2.6"/><path d="M802.4,65 L802.4,46.4 L823,46.4 L823,65" fill="none" stroke="#7ad82c" stroke-width="1.4"/>
<use href="#tape" transform="translate(804.2,46.4) scale(0.88)"/>
<path d="M802,54.4 L811.8,45.6 L822.4,55.2 L812,65.2" fill="none" stroke="#7a0000" stroke-width="2.6" stroke-linejoin="round" stroke-linecap="round"/><path d="M802,54.4 L811.8,45.6 L822.4,55.2 L812,65.2" fill="none" stroke="#e31b1b" stroke-width="1.7" stroke-linejoin="round" stroke-linecap="round"/>
<use href="#tape" transform="translate(834,44.2) scale(1)"/>
<path d="M834,54.4 L844,45.6 L854.8,55.2 L844.4,65.2" fill="none" stroke="#7a0000" stroke-width="2.6" stroke-linejoin="round" stroke-linecap="round"/><path d="M834,54.4 L844,45.6 L854.8,55.2 L844.4,65.2" fill="none" stroke="#e31b1b" stroke-width="1.7" stroke-linejoin="round" stroke-linecap="round"/>
<path d="M867.4,65 L867.4,46.4 L888,46.4 L888,65" fill="none" stroke="#4a9a10" stroke-width="2.6"/><path d="M867.4,65 L867.4,46.4 L888,46.4 L888,65" fill="none" stroke="#7ad82c" stroke-width="1.4"/>
<use href="#tape" transform="translate(869.2,46.4) scale(0.88)"/>
<g id="arrow"><line x1="422.7" y1="136.4" x2="474" y2="78.5" stroke="#ff0a14" stroke-width="2.2"/><polygon points="486.6,64.3 467.6,75.4 477.8,84.0" fill="#ff0a14"/></g>
</svg>
</body></html>
